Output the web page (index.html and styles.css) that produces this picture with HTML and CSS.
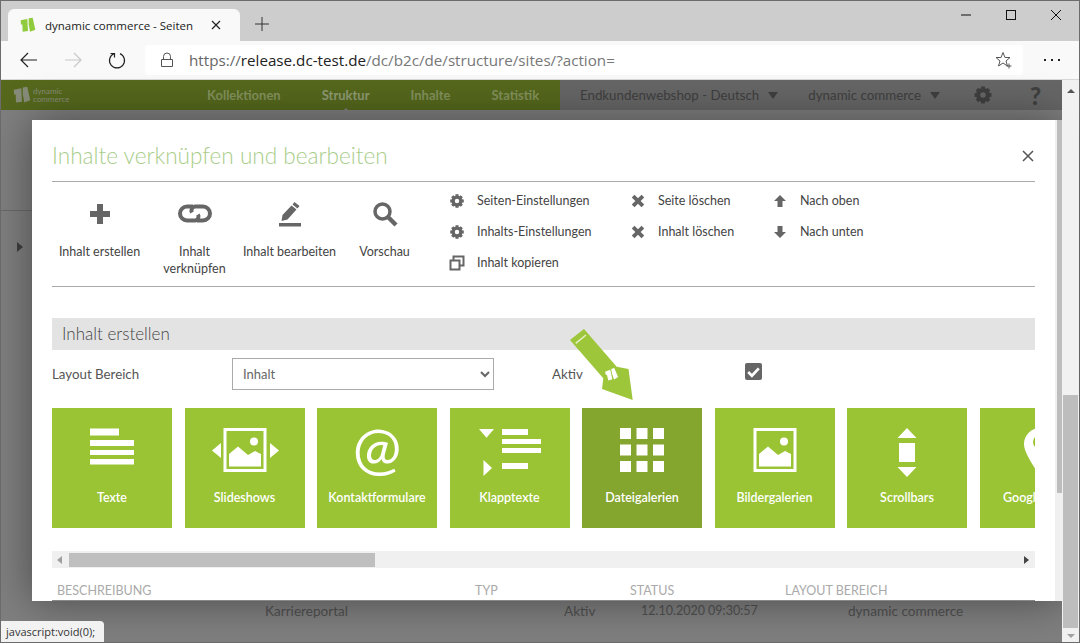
FILE: index.html
```html
<!doctype html>
<html lang="de">
<head>
  <meta charset="utf-8">
  <title>dynamic commerce - Seiten</title>
  <link rel="stylesheet" href="styles.css">
</head>
<body>
  <svg class="defs" width="0" height="0">
    <symbol id="gear" viewBox="-1 -1 26 26">
      <circle cx="12" cy="12" r="6.5" fill="none" stroke="currentColor" stroke-width="5"/>
      <g fill="currentColor">
        <rect x="9.5" y="1" width="5" height="22"/>
        <rect x="9.5" y="1" width="5" height="22" transform="rotate(45 12 12)"/>
        <rect x="9.5" y="1" width="5" height="22" transform="rotate(90 12 12)"/>
        <rect x="9.5" y="1" width="5" height="22" transform="rotate(135 12 12)"/>
      </g>
      <circle cx="12" cy="12" r="3.6" fill="var(--hole)"/>
    </symbol>
    <symbol id="cross" viewBox="-1 -1 18 18">
      <path d="M1 4l3-3 4 4 4-4 3 3-4 4 4 4-3 3-4-4-4 4-3-3 4-4z" fill="currentColor"/>
    </symbol>
    <symbol id="logo" viewBox="0 0 24 24">
      <path d="M1 5l10-2 1 18-8 1-.5-11-2 .5z" fill="currentColor"/>
      <path d="M13 2l6-1 4 18-8 3-2-11z" fill="currentColor"/>
    </symbol>
    <symbol id="picture" viewBox="0 0 60 60">
      <rect x="10" y="9.5" width="40" height="41" fill="none" stroke="#fff" stroke-width="3"/>
      <circle cx="39" cy="21.5" r="4" fill="#fff"/>
      <path d="M14 46.5V34l9-7.5 10 8.500 7-4 6 3v12.500z" fill="#fff"/>
    </symbol>
  </svg>

  <div class="window">
    <div class="titlebar">
      <div class="tab">
        <svg class="favicon" viewBox="0 0 24 24"><use href="#logo"/></svg>
        <span class="tab-title">dynamic commerce - Seiten</span>
        <svg class="tab-close" viewBox="0 0 10 10"><path d="M1 1l8 8M9 1l-8 8" stroke="#222" stroke-width="1.200"/></svg>
      </div>
      <svg class="new-tab" viewBox="0 0 14 14"><path d="M7 0v14M0 7h14" stroke="#333" stroke-width="1"/></svg>
      <div class="win-controls">
        <svg viewBox="0 0 12 12"><path d="M1 6h10" stroke="#111" stroke-width="1"/></svg>
        <svg viewBox="0 0 12 12"><rect x="1.500" y="1.500" width="9" height="9" fill="none" stroke="#111" stroke-width="1"/></svg>
        <svg viewBox="0 0 12 12"><path d="M1 1l10 10M11 1L1 11" stroke="#111" stroke-width="1"/></svg>
      </div>
    </div>

    <div class="toolbar">
      <svg class="tool back-btn" viewBox="0 0 18 16"><path d="M1 8h16M8 1L1 8l7 7" fill="none" stroke="#222" stroke-width="1.200"/></svg>
      <svg class="tool fwd-btn" viewBox="0 0 18 16"><path d="M17 8H1M10 1l7 7-7 7" fill="none" stroke="#c8c8c8" stroke-width="1.200"/></svg>
      <svg class="tool reload-btn" viewBox="0 0 18 18"><path d="M6 2.600a7.500 7.500 0 1 0 6 0M6.500 6.500V2.500H2.500" fill="none" stroke="#222" stroke-width="1.200"/></svg>
      <div class="address">
        <svg class="lock" viewBox="0 0 14 16"><path d="M1.500 7.500h11v7h-11zM3.500 7.500V4.500a3.500 3.500 0 0 1 7 0v3" fill="none" stroke="#555" stroke-width="1"/></svg>
        <span class="url"><span class="url-scheme">https://</span><span class="url-host">release.dc-test.de</span>/dc/b2c/de/structure/sites/?action=</span>
        <svg class="fav-star" viewBox="0 0 18 18"><path d="M8 1.500l2 5h5l-4 3.500 1.500 5L8 12l-4.500 3L5 10 1 6.500h5z" fill="none" stroke="#555" stroke-width="1"/><path d="M14 12.500v5M11.500 15h5" stroke="#555" stroke-width="1"/></svg>
      </div>
      <span class="more"><i></i><i></i><i></i></span>
    </div>

    <div class="page">
      <div class="site">
        <nav class="nav">
          <div class="nav-main">
            <div class="brand">
              <svg class="brand-logo" viewBox="0 0 24 24"><use href="#logo"/></svg>
              <span class="brand-name">dynamic<br>commerce</span>
            </div>
            <a class="nav-link">Kollektionen</a>
            <a class="nav-link nav-current">Struktur</a>
            <a class="nav-link">Inhalte</a>
            <a class="nav-link">Statistik</a>
          </div>
          <div class="nav-side">
            <span class="nav-drop drop-shop">Endkundenwebshop - Deutsch<i class="caret"></i></span>
            <span class="nav-drop drop-client">dynamic commerce<i class="caret"></i></span>
            <svg class="nav-gear"><use href="#gear"/></svg>
            <span class="nav-help">?</span>
          </div>
        </nav>
        <div class="back">
          <div class="tree-line"><i class="tree-arrow"></i></div>
          <div class="back-row">
            <span>Karriereportal</span>
            <span>Aktiv</span>
            <span class="back-date">12.10.2020 09:30:57</span>
            <span>dynamic commerce</span>
          </div>
        </div>
      </div>
      <div class="page-scroll">
        <i class="arrow-up"></i>
        <div class="page-thumb"></div>
        <i class="arrow-down"></i>
      </div>

      <div class="modal">
        <div class="modal-body">
          <div class="modal-title">
            <h2>Inhalte verknüpfen und bearbeiten</h2>
            <svg class="modal-close" viewBox="0 0 12 12"><path d="M1 1l10 10M11 1L1 11" stroke="#555" stroke-width="1.500"/></svg>
          </div>

          <div class="actions">
            <div class="action">
              <svg viewBox="0 0 26 26"><path d="M10 3h6v7h7v6h-7v7h-6v-7H3v-6h7z" fill="#666"/></svg>
              <span>Inhalt erstellen</span>
            </div>
            <div class="action">
              <svg viewBox="0 0 34 26"><g fill="none" stroke="#666" stroke-width="4"><path d="M15 5.500H9a7 7 0 0 0 0 14h8a4 4 0 0 0 3-6"/><path d="M19 19.500h6a7 7 0 0 0 0-14h-8a4 4 0 0 0-3 6"/></g></svg>
              <span>Inhalt<br>verknüpfen</span>
            </div>
            <div class="action">
              <svg viewBox="0 0 26 26"><path d="M17.500 1l5 4-2 2.500-5-4zM14.500 4.500l5 4-9 10-6 1.500 1-6zM2 22h22v3.500H2z" fill="#666"/></svg>
              <span>Inhalt bearbeiten</span>
            </div>
            <div class="action">
              <svg viewBox="0 0 26 26"><circle cx="10.500" cy="10.500" r="7.500" fill="none" stroke="#666" stroke-width="3.500"/><path d="M16 16l8 8" stroke="#666" stroke-width="4.500"/></svg>
              <span>Vorschau</span>
            </div>

            <ul class="links links-a">
              <li><svg class="link-icon"><use href="#gear"/></svg>Seiten-Einstellungen</li>
              <li><svg class="link-icon"><use href="#gear"/></svg>Inhalts-Einstellungen</li>
              <li><svg class="link-icon" viewBox="0 0 16 16"><path d="M4.500 1.500h10v9h-10z" fill="none" stroke="#666" stroke-width="2"/><path d="M1.500 5.500h9v9h-9z" fill="#fff" stroke="#666" stroke-width="2"/></svg>Inhalt kopieren</li>
            </ul>
            <ul class="links links-b">
              <li><svg class="link-icon"><use href="#cross"/></svg>Seite löschen</li>
              <li><svg class="link-icon"><use href="#cross"/></svg>Inhalt löschen</li>
            </ul>
            <ul class="links links-c">
              <li><svg class="link-icon" viewBox="0 0 16 16"><path d="M8 2l6 6h-3.500v6h-5V8H2z" fill="#666"/></svg>Nach oben</li>
              <li><svg class="link-icon" viewBox="0 0 16 16"><path d="M8 14l6-6h-3.500V2h-5v6H2z" fill="#666"/></svg>Nach unten</li>
            </ul>
          </div>

          <div class="section-head">Inhalt erstellen</div>

          <div class="form-row">
            <label class="form-label" for="area">Layout Bereich</label>
            <select class="form-select" id="area"><option>Inhalt</option></select>
            <span class="form-label form-active">Aktiv</span>
            <span class="checkbox"><svg viewBox="0 0 16 16"><path d="M3 8.500l3.500 3.500L13 5" fill="none" stroke="#fff" stroke-width="2.500"/></svg></span>
          </div>

          <div class="tiles">
            <div class="tile">
              <svg class="tile-icon" viewBox="-10 0 80 60"><path d="M8 8.500h29v7H8zM8 20h44v6H8zM8 30h44v5H8zM8 39h44v5.500H8z" fill="#fff"/></svg>
              <span>Texte</span>
            </div>
            <div class="tile">
              <svg class="tile-icon" viewBox="-10 0 80 60"><use href="#picture" width="60" height="60"/><path d="M6 23v15l-9-7.500zM55 23v15l9-7.500z" fill="#fff"/></svg>
              <span>Slideshows</span>
            </div>
            <div class="tile">
              <span class="tile-at">@</span>
              <span>Kontaktformulare</span>
            </div>
            <div class="tile">
              <svg class="tile-icon" viewBox="-10 0 80 60"><path d="M-1 9h15l-7.500 8.700zM22 9h26v6H22zM22 19h39v5H22zM22 28h39v5H22zM22 43h26v6H22zM3.500 40L12 48l-8.500 8z" fill="#fff"/></svg>
              <span>Klapptexte</span>
            </div>
            <div class="tile tile-active">
              <svg class="tile-icon" viewBox="-10 0 80 60"><path d="M8 8h11v11H8zM24.500 8h11v11h-11zM41 8h11v11H41zM8 24.500h11v11H8zM24.500 24.500h11v11h-11zM41 24.500h11v11H41zM8 41h11v11H8zM24.500 41h11v11h-11zM41 41h11v11H41z" fill="#fff"/></svg>
              <span>Dateigalerien</span>
            </div>
            <div class="tile">
              <svg class="tile-icon" viewBox="-10 0 80 60"><use href="#picture" width="60" height="60"/></svg>
              <span>Bildergalerien</span>
            </div>
            <div class="tile">
              <svg class="tile-icon" viewBox="-10 0 80 60"><path d="M30 8l9.500 10h-19zM22 23h16v19H22zM20.500 47h19L30 57z" fill="#fff"/></svg>
              <span>Scrollbars</span>
            </div>
            <div class="tile">
              <svg class="tile-icon" viewBox="-10 0 80 60"><path fill-rule="evenodd" d="M30 8a16 16 0 0 1 16 16c0 9-10 22-16 33-6-11-16-24-16-33A16 16 0 0 1 30 8zm0 7a7 7 0 1 0 0 14 7 7 0 0 0 0-14z" fill="#fff"/></svg>
              <span>Google Maps</span>
            </div>
          </div>

          <div class="hscroll">
            <i class="arrow-left"></i>
            <div class="hscroll-thumb"></div>
            <i class="arrow-right"></i>
          </div>

          <div class="table-head">
            <span>Beschreibung</span>
            <span>Typ</span>
            <span>Status</span>
            <span>Layout Bereich</span>
          </div>
        </div>
        <div class="modal-scroll"><div class="modal-thumb"></div></div>

        <svg class="pencil" viewBox="0 0 70 80">
          <path d="M13 0L-1 11 32.300 49.300 31 60 61.700 71 57.500 40 45.700 37.700z" fill="#9dc63b"/>
          <path d="M4.700 14.300L15 6" stroke="#e4efc6" stroke-width="1.500"/>
          <g transform="rotate(-10 40 45)" color="#fff">
            <use href="#logo" x="34" y="39" width="13" height="13"/>
          </g>
        </svg>
      </div>

      <div class="status-tip">javascript:void(0);</div>
    </div>
  </div>
</body>
</html>
```

FILE: styles.css
```css
html, body {
  margin: 0;
  height: 100%;
  overflow: hidden;
  font-family: "Lato", "Noto Sans", sans-serif;
}

.defs {
  position: absolute;
}

.window {
  height: 643px;
  box-sizing: border-box;
  border: 1px solid #6c6c6c;
  display: flex;
  flex-direction: column;
}

/* browser chrome */
.titlebar {
  height: 40px;
  flex: none;
  background-color: #cdcdcd;
  display: flex;
  align-items: flex-end;
  padding-left: 7px;
}

.tab {
  width: 232px;
  height: 32px;
  box-sizing: border-box;
  background-color: #f9f9f9;
  border-radius: 6px 6px 0 0;
  display: flex;
  align-items: center;
  padding: 0 19px 0 12px;
}

.favicon {
  width: 16px;
  height: 16px;
  color: #8fcb3c;
}

.tab-title {
  margin-left: 9px;
  flex: 1;
  font-family: "Open Sans", sans-serif;
  font-size: 11.500px;
  color: #222;
  white-space: nowrap;
}

.tab-close {
  width: 10px;
  height: 10px;
}

.new-tab {
  width: 14px;
  height: 14px;
  margin: 0 0 10px 15px;
}

.win-controls {
  margin-left: auto;
  align-self: flex-start;
  display: flex;
  gap: 33px;
  padding: 8px 17px 0 0;
}

.win-controls svg {
  width: 12px;
  height: 12px;
}

.toolbar {
  height: 39px;
  flex: none;
  box-sizing: border-box;
  background-color: #f9f9f9;
  border-bottom: 1px solid #d8d8d8;
  display: flex;
  align-items: center;
}

.tool {
  flex: none;
}

.back-btn {
  width: 18px;
  height: 16px;
  margin-left: 19px;
}

.fwd-btn {
  width: 18px;
  height: 16px;
  margin-left: 26px;
}

.reload-btn {
  width: 18px;
  height: 18px;
  margin-left: 26px;
}

.address {
  width: 878px;
  height: 30px;
  margin: 0 0 0 19px;
  background-color: #fff;
  border-radius: 4px;
  display: flex;
  align-items: center;
}

.lock {
  width: 14px;
  height: 16px;
  margin-left: 15px;
}

.url {
  margin-left: 15px;
  font-family: "Open Sans", sans-serif;
  font-size: 15.200px;
  color: #777;
  white-space: nowrap;
}

.url-scheme {
  color: #666;
}

.url-host {
  color: #222;
}

.fav-star {
  width: 18px;
  height: 18px;
  margin: 0 10px 0 auto;
}

.more {
  display: flex;
  gap: 5px;
  margin-left: 21px;
}

.more i {
  width: 2px;
  height: 2px;
  background-color: #222;
}

/* page behind the dialog */
.page {
  flex: 1;
  min-height: 0;
  position: relative;
  display: flex;
  background-color: #7f7f7f;
}

.site {
  flex: 1;
  display: flex;
  flex-direction: column;
}

.nav {
  height: 30px;
  flex: none;
  display: flex;
  background-color: #666;
}

.nav-main {
  width: 559px;
  box-sizing: border-box;
  background-color: #55681c;
  display: flex;
  align-items: center;
  padding-left: 12px;
}

.brand {
  width: 194px;
  flex: none;
  display: flex;
  align-items: center;
  gap: 2px;
  color: #868c78;
}

.brand-logo {
  width: 18px;
  height: 18px;
}

.brand-name {
  font-size: 8px;
  line-height: 8px;
}

.nav-link {
  position: relative;
  margin-right: 41px;
  font-size: 13px;
  font-weight: 700;
  color: #83915c;
}

.nav-current {
  color: #8f9a75;
}

.nav-current::after {
  content: "";
  position: absolute;
  left: 50%;
  bottom: -9px;
  margin-left: -4px;
  border: 4px solid transparent;
  border-top: 0;
  border-bottom-color: #7f7f7f;
}

.nav-side {
  flex: 1;
  display: flex;
  align-items: center;
  color: #3f3f3f;
  font-size: 13.300px;
  --hole: #666;
}

.nav-drop {
  display: flex;
  align-items: center;
}

.drop-shop {
  margin-left: 20px;
}

.drop-client {
  margin-left: 30px;
}

.caret {
  margin-left: 9px;
  border: 5.500px solid transparent;
  border-bottom: 0;
  border-top: 7px solid #3f3f3f;
}

.nav-gear {
  width: 20px;
  height: 20px;
  margin-left: 33px;
  color: #3f3f3f;
}

.nav-help {
  margin-left: 37px;
  font-size: 24px;
  font-weight: 900;
}

.back {
  flex: 1;
  display: flex;
  flex-direction: column;
}

.tree-line {
  width: 31px;
  height: 43px;
  margin-top: 100px;
  border-top: 1px solid #6a6a6a;
  display: flex;
  align-items: flex-end;
  padding-left: 16px;
  box-sizing: border-box;
}

.tree-arrow {
  margin-bottom: 1px;
  border: 5px solid transparent;
  border-right: 0;
  border-left: 6px solid #3f3f3f;
}

.back-row {
  margin-top: auto;
  margin-bottom: 23px;
  padding-left: 264px;
  display: grid;
  grid-template-columns: 299px 77px 207px 1fr;
  font-size: 13.600px;
  color: #505050;
}

.back-date {
  font-size: 12.500px;
}

.page-scroll {
  width: 17px;
  flex: none;
  position: relative;
  z-index: 3;
  background-color: #f1f1f1;
  display: flex;
  flex-direction: column;
  align-items: center;
}

.arrow-up {
  margin-top: 9px;
  border: 4px solid transparent;
  border-top: 0;
  border-bottom: 4px solid #555;
}

.page-thumb {
  width: 15px;
  height: 233px;
  margin-top: 302px;
  background-color: #bdbdbd;
}

.arrow-down {
  margin-top: 6px;
  border: 4px solid transparent;
  border-bottom: 0;
  border-top: 4px solid #a0a0a0;
}

/* dialog */
.modal {
  position: absolute;
  left: 31px;
  top: 40px;
  width: 1031px;
  height: 481px;
  background-color: #fff;
  box-shadow: 0 0 40px rgba(0, 0, 0, .42);
  display: flex;
  overflow: hidden;
  z-index: 2;
}

.modal-body {
  flex: 1;
  min-width: 0;
  padding: 0 20px;
  color: #444;
}

.modal-scroll {
  width: 8px;
  flex: none;
  background-color: #f0f0f0;
}

.modal-thumb {
  height: 373px;
  margin: 0 0 0 2px;
  background-color: #bdbdbd;
}

.modal-title {
  height: 62px;
  box-sizing: border-box;
  border-bottom: 1px solid #aaa;
  display: flex;
  align-items: center;
  justify-content: space-between;
  padding-top: 10px;
}

.modal-title h2 {
  margin: 0;
  font-size: 22.600px;
  font-weight: 300;
  color: #a9cd8a;
}

.modal-close {
  width: 12px;
  height: 12px;
  margin-right: 1px;
}

.actions {
  height: 105px;
  box-sizing: border-box;
  border-bottom: 1px solid #aaa;
  display: flex;
}

.action {
  width: 95px;
  flex: none;
  box-sizing: border-box;
  padding-top: 19px;
  display: flex;
  flex-direction: column;
  align-items: center;
  text-align: center;
  font-size: 12.500px;
  line-height: 17px;
  white-space: nowrap;
}

.action svg {
  height: 26px;
  width: 34px;
  margin-bottom: 16px;
}

.links {
  list-style: none;
  margin: 0;
  padding: 3px 0 0;
  flex: none;
  font-size: 12.500px;
}

.links li {
  height: 31px;
  display: flex;
  align-items: center;
  --hole: #fff;
  color: #444;
}

.links-a {
  width: 181px;
  margin-left: 17px;
}

.links-b {
  width: 142px;
}

.link-icon {
  width: 16px;
  height: 16px;
  margin-right: 12px;
  color: #666;
  flex: none;
}

.section-head {
  margin-top: 31px;
  height: 32px;
  line-height: 32px;
  padding-left: 10px;
  background-color: #e3e3e3;
  font-size: 17px;
  font-weight: 300;
  color: #444;
}

.form-row {
  margin-top: 8px;
  height: 32px;
  display: flex;
  align-items: center;
}

.form-label {
  width: 180px;
  flex: none;
  font-size: 13.300px;
  color: #555;
}

.form-select {
  width: 262px;
  height: 32px;
  flex: none;
  padding-left: 6px;
  background-color: #fff;
  border: 1px solid #aaa;
  font-family: inherit;
  font-size: 13px;
  color: #666;
}

.form-active {
  width: 193px;
  margin-left: 58px;
}

.checkbox {
  width: 17px;
  height: 17px;
  margin-top: -5px;
  background-color: #666;
  border-radius: 2px;
  display: flex;
}

.tiles {
  margin-top: 18px;
  display: flex;
  gap: 12.500px;
  overflow: hidden;
}

.tile {
  width: 120px;
  height: 120px;
  flex: none;
  box-sizing: border-box;
  padding-top: 12px;
  background-color: #9ac434;
  display: flex;
  flex-direction: column;
  align-items: center;
  font-size: 12.500px;
  font-weight: 600;
  color: #fff;
  white-space: nowrap;
}

.tile-active {
  background-color: #84a52e;
}

.tile-icon {
  width: 80px;
  height: 60px;
  margin-bottom: 10px;
}

.tile-at {
  height: 60px;
  margin-bottom: 10px;
  font-size: 58px;
  line-height: 54px;
  font-weight: 400;
}

.hscroll {
  margin-top: 23px;
  height: 17px;
  background-color: #f0f0f0;
  display: flex;
  align-items: center;
  padding: 0 6px 0 5px;
}

.arrow-left {
  border: 4px solid transparent;
  border-left: 0;
  border-right: 5px solid #a0a0a0;
}

.hscroll-thumb {
  width: 306px;
  height: 14px;
  margin-left: 7px;
  background-color: #bfbfbf;
}

.arrow-right {
  margin-left: auto;
  border: 4px solid transparent;
  border-right: 0;
  border-left: 5px solid #444;
}

.table-head {
  margin-top: 12px;
  height: 21px;
  box-sizing: border-box;
  border-bottom: 1px solid #888;
  padding-left: 5px;
  display: grid;
  grid-template-columns: 418px 155px 155px 1fr;
  font-size: 12.500px;
  line-height: 22px;
  text-transform: uppercase;
  color: #aaa;
}

.pencil {
  position: absolute;
  left: 539px;
  top: 209px;
  width: 70px;
  height: 80px;
  overflow: visible;
}

.status-tip {
  position: absolute;
  left: 0;
  bottom: 0;
  z-index: 4;
  width: 103px;
  height: 21px;
  box-sizing: border-box;
  padding-left: 5px;
  background-color: #f2f2f2;
  border-radius: 0 4px 0 0;
  font-family: "Open Sans", sans-serif;
  font-size: 11px;
  line-height: 21px;
  color: #333;
}
```
